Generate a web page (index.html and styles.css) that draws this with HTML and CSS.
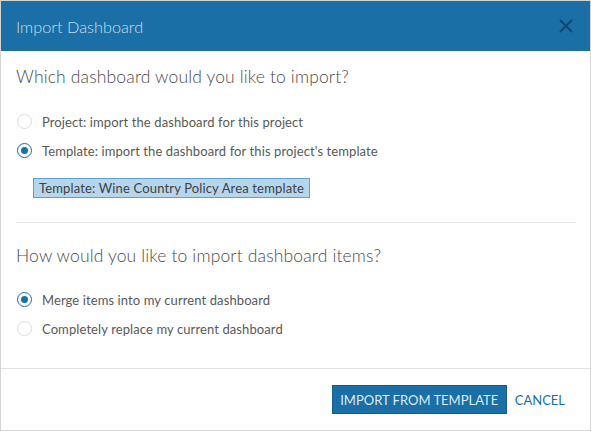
FILE: index.html
```html
<!DOCTYPE html>
<html>
<head>
<meta charset="utf-8">
<link rel="stylesheet" href="styles.css">
</head>
<body>
<div class="dialog">
  <div class="header">
    <span class="title">Import Dashboard</span>
    <svg class="close" width="14" height="14" viewBox="0 0 14 14"><path d="M1 1 L13 13 M13 1 L1 13" stroke="#11466f" stroke-width="2" fill="none"/></svg>
  </div>
  <div class="body">
    <div class="section">
      <h2 class="question">Which dashboard would you like to import?</h2>
      <label class="option"><span class="radio"></span>Project: import the dashboard for this project</label>
      <label class="option"><span class="radio checked"></span>Template: import the dashboard for this project's template</label>
      <div class="tag">Template: Wine Country Policy Area template</div>
    </div>
    <div class="divider"></div>
    <div class="section second">
      <h2 class="question">How would you like to import dashboard items?</h2>
      <label class="option"><span class="radio checked"></span>Merge items into my current dashboard</label>
      <label class="option"><span class="radio"></span>Completely replace my current dashboard</label>
    </div>
  </div>
  <div class="footer">
    <button class="primary">IMPORT FROM TEMPLATE</button>
    <button class="link">CANCEL</button>
  </div>
</div>
</body>
</html>
```
FILE: styles.css
```css
* { box-sizing: border-box; }
html, body { margin: 0; padding: 0; background: #fff; }
body { font-family: "Lato", "Open Sans", sans-serif; color: #595959; }
.dialog {
  width: 591px;
  height: 431px;
  border: 1px solid #d4d4d4;
  display: flex;
  flex-direction: column;
}
.header {
  height: 50px;
  background: #1a6fa6;
  display: flex;
  align-items: center;
  justify-content: space-between;
  padding: 0 17px 0 15px;
}
.title {
  color: #c9dff0;
  font-size: 16.3px;
  font-weight: 300;
}
.close { display: block; }
.body {
  flex: 1;
  padding: 0 14px 0 15px;
}
.section { padding-top: 14px; }
.question {
  margin: 0 0 18px 0;
  font-size: 17.5px;
  font-weight: 300;
  color: #4c4c4c;
  line-height: 24px;
  letter-spacing: 0.15px;
}
.option {
  display: flex;
  align-items: center;
  height: 29px;
  font-size: 13px;
  color: #595959;
  letter-spacing: 0.1px;
}
.radio {
  width: 15px;
  height: 15px;
  border-radius: 50%;
  border: 1px solid #dcdcdc;
  margin: 0 10px 0 1px;
  display: flex;
  align-items: center;
  justify-content: center;
  background: #fff;
}
.radio.checked { border: 1.5px solid #1a6fa6; }
.radio.checked::after {
  content: "";
  width: 7px;
  height: 7px;
  border-radius: 50%;
  background: #1a6fa6;
}
.tag {
  display: inline-block;
  margin: 13px 0 0 17px;
  height: 20px;
  line-height: 18px;
  padding: 0 5px 0 5px;
  background: #b6d6ee;
  border: 1px solid #5fa0d4;
  font-size: 13px;
  letter-spacing: 0.15px;
  color: #404040;
}
.divider {
  height: 1px;
  background: #e5e5e5;
  margin-top: 24px;
}
.second { padding-top: 21px; }
.second .question { margin-bottom: 17px; }
.footer {
  height: 62px;
  border-top: 1px solid #e2e2e2;
  display: flex;
  align-items: center;
  justify-content: flex-end;
  padding: 0 25px 0 0;
  gap: 8px;
}
button { font-family: inherit; cursor: pointer; }
.primary {
  height: 29px;
  width: 175px;
  background: #1a6fa6;
  border: 1px solid #125d8f;
  color: #dde9f3;
  font-size: 13px;
  padding: 0;
}
.link {
  background: none;
  border: none;
  color: #1a6fa6;
  font-size: 13px;
  padding: 0;
}
```
